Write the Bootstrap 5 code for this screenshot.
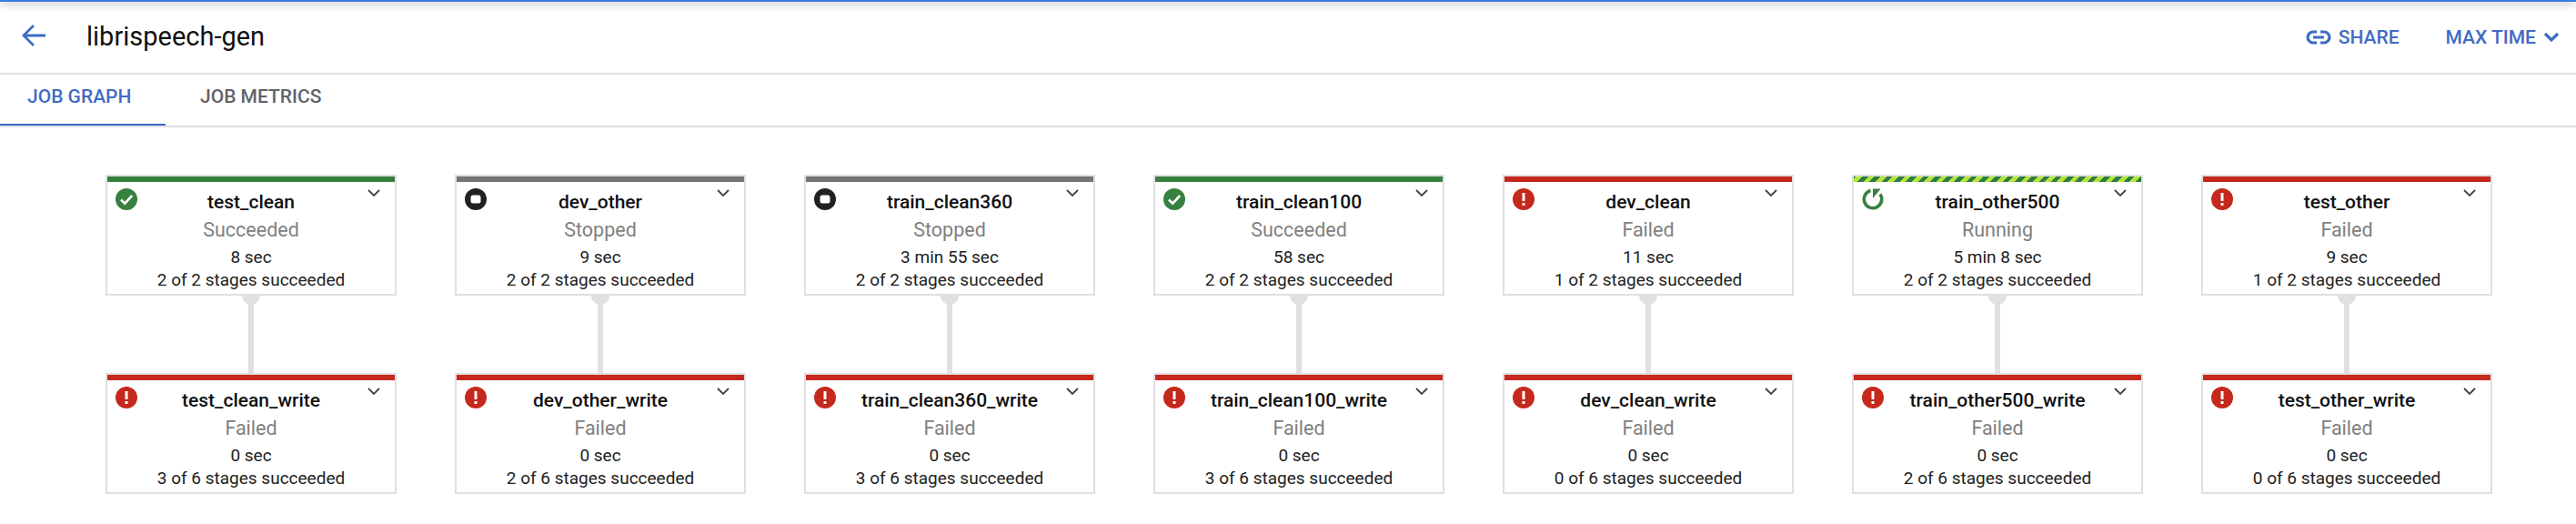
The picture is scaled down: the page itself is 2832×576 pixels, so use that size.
<!DOCTYPE html>
<html lang="en">
<head>
    <meta charset="UTF-8">
    <title>librispeech-gen</title>
    <link href="https://cdn.jsdelivr.net/npm/bootstrap@5.3.0/dist/css/bootstrap.min.css" rel="stylesheet">
    <style>
        body {
            font-family: Roboto, "Liberation Sans", sans-serif;
            background: #fff;
            color: #212121;
            overflow: hidden;
        }

        .top-line {
            height: 2px;
            background: #3b78e7;
            box-shadow: 0 2px 8px rgba(0, 0, 0, .55);
        }

        .page-head {
            height: 80px;
            padding: 0 18px 0 23px;
            border-bottom: 2px solid #e0e0e0;
        }

        .back-arrow {
            margin-top: -4px;
        }

        .page-title {
            font-size: 29px;
            font-weight: 400;
            color: #111;
            margin: -2px 0 0 42px;
            line-height: 1;
        }

        .head-btn {
            font-size: 21px;
            font-weight: 500;
            color: #3f6bc6;
            line-height: 1;
        }

        .max-time {
            margin-left: 51px;
        }

        .job-tabs {
            height: 58px;
            border-bottom: 2px solid #e0e0e0;
        }

        .job-tab {
            font-size: 21px;
            font-weight: 500;
            color: #5f6368;
            padding: 0 30px 4px;
            border-bottom: 2px solid transparent;
            min-width: 182px;
        }

        .job-tab.active-tab {
            color: #3f6bc6;
            border-bottom-color: #3f6bc6;
        }

        .job-tab + .job-tab {
            padding-left: 38px;
        }

        .job-graph {
            padding: 52px 0 0 116px;
            gap: 64px;
        }

        .job-col {
            width: 320px;
        }

        .job-node {
            height: 133px;
            border: 2px solid #e0e0e0;
            background: #fff;
            text-align: center;
        }

        .node-bar {
            height: 6px;
        }

        .bar-ok { background: #38803f; }
        .bar-stop { background: #757575; }
        .bar-fail { background: #c5281c; }
        .bar-run {
            background: repeating-linear-gradient(-45deg, #2f7d45 0 4.7px, #b6e33c 4.7px 9.4px);
        }

        .node-icon {
            position: absolute;
            left: 9px;
            top: 13px;
        }

        .node-chev {
            position: absolute;
            right: 15px;
            top: 13px;
        }

        .node-name {
            font-size: 21px;
            font-weight: 500;
            color: #111;
            line-height: 24px;
            margin-top: 10px;
        }

        .node-status {
            font-size: 21.5px;
            color: #808080;
            line-height: 24px;
            margin-top: 7px;
        }

        .node-line {
            font-size: 19px;
            color: #212121;
            line-height: 25px;
        }

        .node-time {
            margin-top: 5px;
        }

        .job-link {
            height: 85px;
        }

        .link-stem {
            width: 6px;
            background: #e0e0e0;
        }

        .link-cap {
            width: 20px;
            height: 10px;
            background: #e0e0e0;
            border-radius: 0 0 10px 10px;
            position: absolute;
            top: 0;
            left: 50%;
            margin-left: -10px;
        }
    </style>
</head>
<body>
    <div class="top-line"></div>

    <div class="page-head d-flex align-items-center">
        <svg class="back-arrow" width="30" height="30" viewBox="0 0 30 30" fill="none" stroke="#3f6bc6" stroke-width="2.8">
            <path d="M27 15H3M14 4 3 15l11 11"/>
        </svg>
        <h1 class="page-title">librispeech-gen</h1>
        <div class="ms-auto d-flex align-items-center">
            <svg width="28" height="16" viewBox="0 0 28 16" fill="none" stroke="#3f6bc6" stroke-width="3.2">
                <path d="M12 2H8a6 6 0 0 0 0 12h4M16 2h4a6 6 0 0 1 0 12h-4M8 8h12"/>
            </svg>
            <span class="head-btn ms-2">SHARE</span>
            <span class="head-btn max-time">MAX TIME</span>
            <svg class="ms-2" width="18" height="12" viewBox="0 0 18 12" fill="none" stroke="#3f6bc6" stroke-width="3.2">
                <path d="m2 2 7 7 7-7"/>
            </svg>
        </div>
    </div>

    <div class="job-tabs d-flex">
        <div class="job-tab active-tab d-flex align-items-center">JOB GRAPH</div>
        <div class="job-tab d-flex align-items-center">JOB METRICS</div>
    </div>

    <div class="job-graph d-flex" id="jobGraph"></div>

    <script>
        const icons = {
            ok: '<circle cx="12" cy="12" r="12" fill="#38803f"/><path d="m6 12.5 4.2 4.2L18.2 8" fill="none" stroke="#fff" stroke-width="2.6"/>',
            stop: '<circle cx="12" cy="12" r="12" fill="#212121"/><rect x="6.5" y="7.5" width="11" height="9" rx="2.5" fill="#fff"/>',
            fail: '<circle cx="12" cy="12" r="12" fill="#c5281c"/><rect x="10.5" y="5" width="3" height="9" fill="#fff"/><rect x="10.5" y="16" width="3" height="3" fill="#fff"/>',
            run: '<path d="M20 6.5A9.7 9.7 0 1 1 9.5 2.6" fill="none" stroke="#38803f" stroke-width="3.6"/><path d="M12 .5h8.5L12 11z" fill="#38803f"/>'
        };

        const jobs = [
            [['test_clean', 'ok', 'Succeeded', '8 sec', '2 of 2'], ['test_clean_write', 'fail', 'Failed', '0 sec', '3 of 6']],
            [['dev_other', 'stop', 'Stopped', '9 sec', '2 of 2'], ['dev_other_write', 'fail', 'Failed', '0 sec', '2 of 6']],
            [['train_clean360', 'stop', 'Stopped', '3 min 55 sec', '2 of 2'], ['train_clean360_write', 'fail', 'Failed', '0 sec', '3 of 6']],
            [['train_clean100', 'ok', 'Succeeded', '58 sec', '2 of 2'], ['train_clean100_write', 'fail', 'Failed', '0 sec', '3 of 6']],
            [['dev_clean', 'fail', 'Failed', '11 sec', '1 of 2'], ['dev_clean_write', 'fail', 'Failed', '0 sec', '0 of 6']],
            [['train_other500', 'run', 'Running', '5 min 8 sec', '2 of 2'], ['train_other500_write', 'fail', 'Failed', '0 sec', '2 of 6']],
            [['test_other', 'fail', 'Failed', '9 sec', '1 of 2'], ['test_other_write', 'fail', 'Failed', '0 sec', '0 of 6']]
        ];

        function nodeHtml(job) {
            const [name, state, status, time, stages] = job;
            return `
                <div class="job-node position-relative">
                    <div class="node-bar bar-${state}"></div>
                    <svg class="node-icon" width="24" height="24" viewBox="0 0 24 24">${icons[state]}</svg>
                    <svg class="node-chev" width="16" height="10" viewBox="0 0 16 10" fill="none" stroke="#424242" stroke-width="1.8">
                        <path d="m2 2 6 6 6-6"/>
                    </svg>
                    <div class="node-name">${name}</div>
                    <div class="node-status">${status}</div>
                    <div class="node-line node-time">${time}</div>
                    <div class="node-line">${stages} stages succeeded</div>
                </div>
            `;
        }

        document.getElementById('jobGraph').innerHTML = jobs.map(col => `
            <div class="job-col">
                ${nodeHtml(col[0])}
                <div class="job-link position-relative d-flex justify-content-center">
                    <div class="link-cap"></div>
                    <div class="link-stem"></div>
                </div>
                ${nodeHtml(col[1])}
            </div>
        `).join('');
    </script>
</body>
</html>
